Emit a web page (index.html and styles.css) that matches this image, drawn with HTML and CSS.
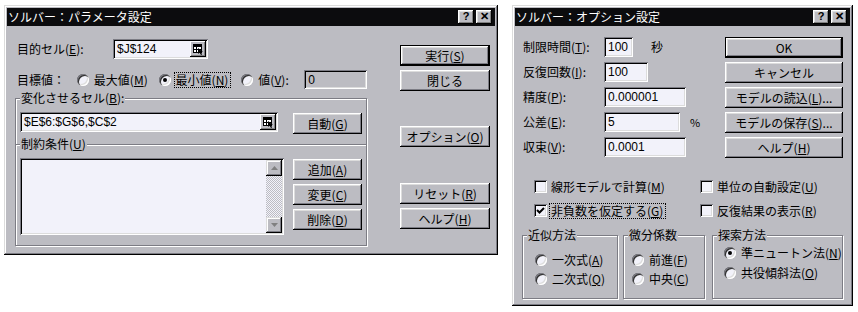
FILE: index.html
```html
<!DOCTYPE html>
<html lang="ja">
<head>
  <meta charset="UTF-8" />
  <title>ソルバー</title>
  <link rel="stylesheet" href="styles.css">
</head>
<body>
<div class="screen">

  <!-- パラメータ設定 -->
  <div class="dialog solver">
    <div class="titlebar">
      <span class="title">ソルバー：パラメータ設定</span>
      <span class="tb-btns"><span class="tb-btn">?</span><span class="tb-btn">✕</span></span>
    </div>
    <div class="solver-body">
      <div class="solver-main">
        <div class="row target-row">
          <span class="lbl target-lbl">目的セル(<u>E</u>):</span>
          <span class="field target-field">$J$124
            <svg class="refbtn" width="16" height="16" viewBox="0 0 16 16">
              <rect width="16" height="16" fill="#bcbcc2"/>
              <path d="M0 .5H15.5M.5 0V15.5" stroke="#fff"/>
              <path d="M0 15.5H16M15.5 0V16" stroke="#000"/>
              <path d="M1 14.5H15M14.5 1V15" stroke="#808080"/>
              <rect x="3" y="3" width="9" height="2" fill="#000"/>
              <rect x="3.5" y="5.5" width="8" height="6" fill="#fff" stroke="#000"/>
              <path d="M3.5 8.5H11.5M6.5 5V12" stroke="#000"/>
              <path d="M8 7L8 13L9.5 11.5L11 14L12 13.5L11 11H13Z" fill="#000"/>
            </svg>
          </span>
        </div>
        <div class="row goal-row">
          <span class="lbl goal-lbl">目標値：</span>
          <span class="opt goal-max"><span class="radio"></span><span>最大値(<u>M</u>)</span></span>
          <span class="opt goal-min"><span class="radio checked"></span><span class="focus">最小値(<u>N</u>)</span></span>
          <span class="opt goal-val"><span class="radio"></span><span>値(<u>V</u>):</span></span>
          <span class="field off value-field">0</span>
        </div>
        <div class="group change-group">
          <div class="legend">変化させるセル(<u>B</u>):</div>
          <div class="group-row">
            <span class="field cells-field">$E$6:$G$6,$C$2
              <svg class="refbtn" width="16" height="16" viewBox="0 0 16 16">
                <rect width="16" height="16" fill="#bcbcc2"/>
                <path d="M0 .5H15.5M.5 0V15.5" stroke="#fff"/>
                <path d="M0 15.5H16M15.5 0V16" stroke="#000"/>
                <path d="M1 14.5H15M14.5 1V15" stroke="#808080"/>
                <rect x="3" y="3" width="9" height="2" fill="#000"/>
                <rect x="3.5" y="5.5" width="8" height="6" fill="#fff" stroke="#000"/>
                <path d="M3.5 8.5H11.5M6.5 5V12" stroke="#000"/>
                <path d="M8 7L8 13L9.5 11.5L11 14L12 13.5L11 11H13Z" fill="#000"/>
              </svg>
            </span>
            <span class="btn small-btn auto-btn">自動(<u>G</u>)</span>
          </div>
        </div>
        <div class="group constraint-group">
          <div class="legend">制約条件(<u>U</u>)</div>
          <div class="group-row">
            <div class="listbox">
              <div class="list-items"></div>
              <div class="scrollbar">
                <span class="sb-btn">
                  <svg width="7" height="4" viewBox="0 0 7 4"><path d="M3.5 0L7 4H0Z" fill="#808080"/></svg>
                </span>
                <span class="sb-track"></span>
                <span class="sb-btn">
                  <svg width="7" height="4" viewBox="0 0 7 4"><path d="M0 0H7L3.5 4Z" fill="#808080"/></svg>
                </span>
              </div>
            </div>
            <div class="btn-stack">
              <span class="btn small-btn">追加(<u>A</u>)</span>
              <span class="btn small-btn">変更(<u>C</u>)</span>
              <span class="btn small-btn">削除(<u>D</u>)</span>
            </div>
          </div>
        </div>
      </div>
      <div class="solver-side">
        <span class="btn default">実行(<u>S</u>)</span>
        <span class="btn">閉じる</span>
        <span class="btn option-btn">オプション(<u>O</u>)</span>
        <span class="btn reset-btn">リセット(<u>R</u>)</span>
        <span class="btn">ヘルプ(<u>H</u>)</span>
      </div>
    </div>
  </div>

  <!-- オプション設定 -->
  <div class="dialog options">
    <div class="titlebar">
      <span class="title">ソルバー：オプション設定</span>
      <span class="tb-btns"><span class="tb-btn">?</span><span class="tb-btn">✕</span></span>
    </div>
    <div class="options-body">
      <div class="opt-top">
        <div class="opt-fields">
          <div class="frow">
            <span class="flbl">制限時間(<u>T</u>):</span>
            <span class="field w-time">100</span>
            <span class="unit sec">秒</span>
          </div>
          <div class="frow">
            <span class="flbl">反復回数(<u>I</u>):</span>
            <span class="field w-iter">100</span>
          </div>
          <div class="frow">
            <span class="flbl">精度(<u>P</u>):</span>
            <span class="field w-long">0.000001</span>
          </div>
          <div class="frow">
            <span class="flbl">公差(<u>E</u>):</span>
            <span class="field w-tol">5</span>
            <span class="unit pct">%</span>
          </div>
          <div class="frow">
            <span class="flbl">収束(<u>V</u>):</span>
            <span class="field w-long">0.0001</span>
          </div>
        </div>
        <div class="opt-buttons">
          <span class="btn default">OK</span>
          <span class="btn">キャンセル</span>
          <span class="btn">モデルの読込(<u>L</u>)...</span>
          <span class="btn">モデルの保存(<u>S</u>)...</span>
          <span class="btn">ヘルプ(<u>H</u>)</span>
        </div>
      </div>

      <div class="checks">
        <span class="check-item"><span class="checkbox"></span><span>線形モデルで計算(<u>M</u>)</span></span>
        <span class="check-item"><span class="checkbox"></span><span>単位の自動設定(<u>U</u>)</span></span>
        <span class="check-item">
          <span class="checkbox">
            <svg width="9" height="9" viewBox="0 0 9 9"><path d="M1 4L3.5 6.5L8 2" fill="none" stroke="#000" stroke-width="2"/></svg>
          </span>
          <span class="focus">非負数を仮定する(<u>G</u>)</span>
        </span>
        <span class="check-item"><span class="checkbox"></span><span>反復結果の表示(<u>R</u>)</span></span>
      </div>

      <div class="opt-groups">
        <div class="group og og-approx">
          <div class="legend">近似方法</div>
          <div class="radios">
            <span class="opt"><span class="radio"></span><span>一次式(<u>A</u>)</span></span>
            <span class="opt"><span class="radio"></span><span>二次式(<u>Q</u>)</span></span>
          </div>
        </div>
        <div class="group og og-deriv">
          <div class="legend">微分係数</div>
          <div class="radios">
            <span class="opt"><span class="radio"></span><span>前進(<u>F</u>)</span></span>
            <span class="opt"><span class="radio"></span><span>中央(<u>C</u>)</span></span>
          </div>
        </div>
        <div class="group og og-search">
          <div class="legend">探索方法</div>
          <div class="radios">
            <span class="opt"><span class="radio checked"></span><span>準ニュートン法(<u>N</u>)</span></span>
            <span class="opt"><span class="radio"></span><span>共役傾斜法(<u>O</u>)</span></span>
          </div>
        </div>
      </div>
    </div>
  </div>

</div>
</body>
</html>
```

FILE: styles.css
```css
/* Windows 95 風のダイアログ */
body {
  margin: 0;
  background: #fff;
  font-family: "Noto Sans CJK JP", "Noto Sans", sans-serif;
  font-size: 12px;
  line-height: 14px;
  color: #000;
}

u {
  text-decoration: underline;
  text-underline-offset: 1px;
}

.screen {
  display: flex;
  align-items: flex-start;
  padding: 5px 0 0 4px;
}

.dialog {
  box-sizing: border-box;
  padding: 3px;
  background: #bcbcc2;
  box-shadow: inset -1px -1px #000, inset 1px 1px #dcdcdc,
              inset -2px -2px #7c7c84, inset 2px 2px #fff;
}

.solver {
  width: 494px;
  height: 250px;
}

.options {
  width: 341px;
  height: 301px;
  margin-left: 14px;
}

/* タイトルバー */
.titlebar {
  height: 18px;
  background: #0c0c0e;
  color: #fff;
  display: flex;
  align-items: center;
  justify-content: space-between;
  padding: 0 3px 0 1px;
}

.tb-btns {
  display: flex;
  gap: 2px;
}

.tb-btn {
  box-sizing: border-box;
  width: 16px;
  height: 14px;
  background: #bcbcc2;
  color: #000;
  font-family: "Liberation Sans", sans-serif;
  font-weight: bold;
  font-size: 11px;
  line-height: 12px;
  text-align: center;
  box-shadow: inset -1px -1px #000, inset 1px 1px #fff,
              inset -2px -2px #808080, inset 2px 2px #dfdfdf;
}

/* 共通部品 */
.btn {
  box-sizing: border-box;
  height: 21px;
  display: flex;
  align-items: center;
  justify-content: center;
  background: #bcbcc2;
  box-shadow: inset -1px -1px #000, inset 1px 1px #fff,
              inset -2px -2px #7c7c84, inset 2px 2px #dcdcdc;
}

.btn.default {
  border: 1px solid #000;
}

.field {
  box-sizing: border-box;
  height: 20px;
  display: flex;
  align-items: center;
  padding: 0 2px 0 4px;
  background: #f2f2fa;
  box-shadow: inset 1px 1px #7c7c84, inset -1px -1px #fff,
              inset 2px 2px #000, inset -2px -2px #dcdcdc;
  font-family: "Liberation Sans", "Noto Sans CJK JP", sans-serif;
}

.field.off {
  background: #bcbcc2;
}

.refbtn {
  margin-left: auto;
}

.radio {
  position: relative;
  flex: none;
  width: 12px;
  height: 12px;
  border-radius: 50%;
  background: #f2f2fa;
  box-shadow: inset 1px 1px #7c7c84, inset 2px 2px #303030,
              inset -1px -1px #fff, inset -2px -2px #dcdcdc;
}

.radio.checked::after {
  content: "";
  position: absolute;
  left: 4px;
  top: 4px;
  width: 4px;
  height: 4px;
  border-radius: 50%;
  background: #000;
}

.opt {
  display: flex;
  align-items: center;
  gap: 5px;
}

.focus {
  padding: 0 2px 0 1px;
  margin-left: -1px;
  outline: 1px dotted #000;
  outline-offset: 0;
}

.group {
  box-sizing: border-box;
  border: 1px solid #7c7c84;
  box-shadow: inset 1px 1px #fff, 1px 1px #fff;
}

.legend {
  width: fit-content;
  margin: -8px 0 0 4px;
  padding: 0 1px;
  background: #bcbcc2;
}

/* パラメータ設定の本体 */
.solver-body {
  display: flex;
}

.solver-main {
  width: 352px;
  margin-left: 8px;
}

.row {
  display: flex;
  align-items: center;
}

.lbl {
  box-sizing: border-box;
  padding-left: 2px;
}

.target-row {
  margin-top: 13px;
  height: 20px;
}

.target-lbl { width: 98px; }
.target-field { width: 95px; }

.goal-row {
  margin-top: 11px;
  height: 19px;
}

.goal-lbl { width: 62px; }
.goal-max { width: 82px; }
.goal-min { width: 83px; }
.goal-val { width: 63px; }

.value-field {
  width: 63px;
  height: 19px;
}

.group-row {
  display: flex;
  align-items: flex-start;
  margin-top: 7px;
  padding-left: 4px;
}

.change-group {
  margin-top: 9px;
  height: 46px;
  border-bottom: none;
}

.cells-field { width: 258px; }

.small-btn {
  width: 69px;
}

.auto-btn {
  margin: 1px 0 0 15px;
}

.constraint-group {
  height: 102px;
}

.listbox {
  box-sizing: border-box;
  width: 264px;
  height: 77px;
  display: flex;
  padding: 2px;
  background: #f2f2fa;
  box-shadow: inset 1px 1px #7c7c84, inset -1px -1px #fff,
              inset 2px 2px #000, inset -2px -2px #dcdcdc;
}

.list-items {
  flex: 1;
}

.scrollbar {
  width: 16px;
  display: flex;
  flex-direction: column;
}

.sb-btn {
  box-sizing: border-box;
  height: 16px;
  display: flex;
  align-items: center;
  justify-content: center;
  background: #bcbcc2;
  box-shadow: inset -1px -1px #000, inset 1px 1px #dcdcdc,
              inset -2px -2px #7c7c84, inset 2px 2px #fff;
}

.sb-track {
  flex: 1;
  background: repeating-conic-gradient(#f2f2fa 0 25%, #bcbcc2 0 50%) 0 0 / 2px 2px;
}

.btn-stack {
  display: flex;
  flex-direction: column;
  gap: 4px;
  margin: 1px 0 0 9px;
}

.solver-side {
  width: 90px;
  margin-left: 33px;
  padding-top: 19px;
  display: flex;
  flex-direction: column;
  gap: 4px;
}

.option-btn { margin-top: 31px; }
.reset-btn { margin-top: 32px; }

/* オプション設定の本体 */
.opt-top {
  display: flex;
}

.opt-fields {
  width: 210px;
  padding-top: 11px;
}

.frow {
  display: flex;
  align-items: center;
  height: 20px;
  margin-bottom: 5px;
}

.flbl {
  box-sizing: border-box;
  width: 89px;
  padding-left: 8px;
}

.w-time { width: 29px; }
.w-iter { width: 44px; }
.w-long { width: 82px; }
.w-tol { width: 76px; }

.unit.sec { margin-left: 18px; }
.unit.pct {
  margin-left: 10px;
  font-size: 11px;
}

.opt-buttons {
  width: 118px;
  padding-top: 11px;
  display: flex;
  flex-direction: column;
  gap: 4px;
}

.checks {
  display: grid;
  grid-template-columns: 166px auto;
  row-gap: 11px;
  margin-top: 18px;
  padding-left: 19px;
}

.check-item {
  display: flex;
  align-items: center;
  gap: 4px;
  height: 13px;
}

.checkbox {
  box-sizing: border-box;
  width: 13px;
  height: 13px;
  display: flex;
  align-items: center;
  justify-content: center;
  background: #f2f2fa;
  box-shadow: inset 1px 1px #7c7c84, inset -1px -1px #fff,
              inset 2px 2px #000, inset -2px -2px #dcdcdc;
}

.opt-groups {
  display: flex;
  margin-top: 18px;
  padding-left: 7px;
}

.og {
  height: 64px;
}

.og-approx { width: 96px; }
.og-deriv { width: 82px; margin-left: 5px; }
.og-search { width: 131px; margin-left: 7px; }

.radios {
  display: flex;
  flex-direction: column;
  gap: 5px;
  margin-top: 11px;
}

.og-approx .radios { padding-left: 12px; }
.og-deriv .radios { padding-left: 8px; }
.og-search .radios {
  padding-left: 11px;
  margin-top: 4px;
  gap: 6px;
}
```
